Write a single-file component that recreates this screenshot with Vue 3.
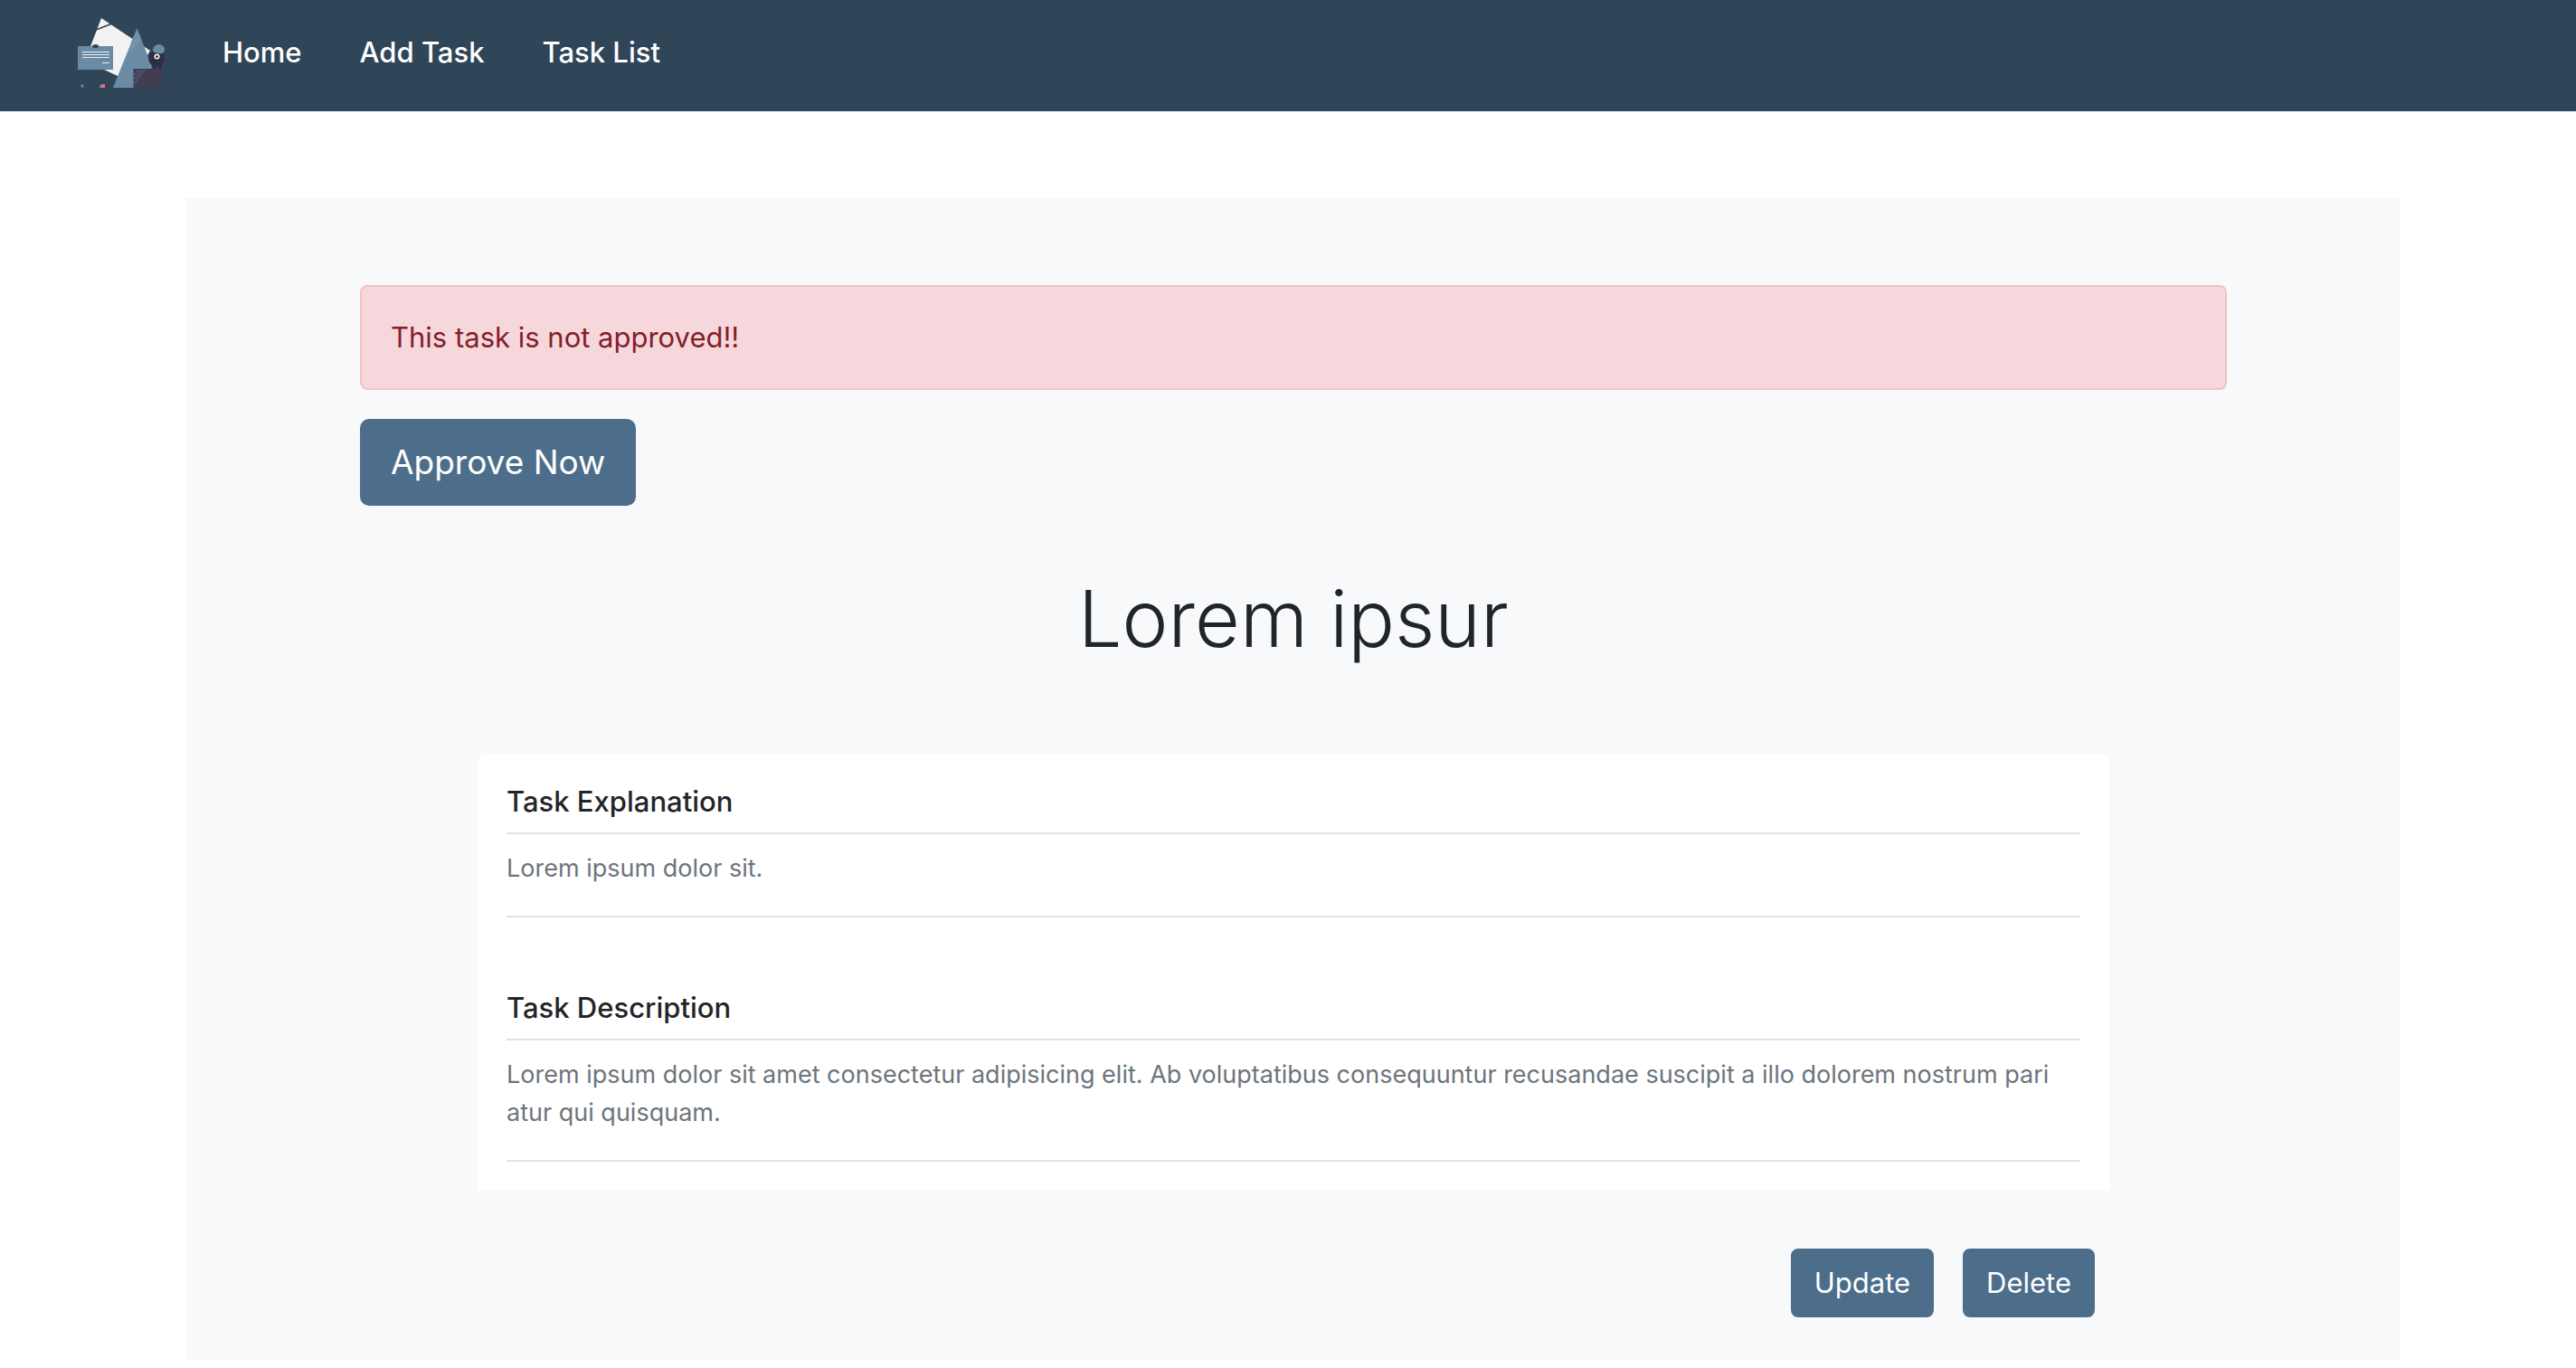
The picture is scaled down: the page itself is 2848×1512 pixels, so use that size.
<script setup>
const links = ['Home', 'Add Task', 'Task List']

const task = {
  title: 'Lorem ipsur',
  explanation: 'Lorem ipsum dolor sit.',
  description:
    'Lorem ipsum dolor sit amet consectetur adipisicing elit. Ab voluptatibus consequuntur recusandae suscipit a illo dolorem nostrum pari atur qui quisquam.',
}
</script>

<template>
  <nav class="navbar">
    <a class="brand" href="#" aria-label="Home page">
      <svg viewBox="0 0 100 80" width="100" height="80" aria-hidden="true">
        <path d="M28 2 82 38 61 73 10 49Z" fill="#f2f2f2" />
        <path d="M17 17 40 8" stroke="#2f4558" stroke-width="1.4" />
        <rect x="2" y="33" width="39" height="26" fill="#6b8ba4" />
        <path d="M7 39.5H37M7 42.5H37M7 45.5H37M29 51.5H37" stroke="#e8edf2" stroke-width="1" />
        <ellipse cx="21.5" cy="33" rx="3.5" ry="2" fill="#3f3d56" />
        <path d="M67.5 13 85 58V79H41Z" fill="#6b8ba4" />
        <path d="M60 29 68 18M59 35 71 21M58 39 72 25" stroke="#9fb6c9" stroke-width=".6" />
        <rect x="63.5" y="58" width="31.5" height="21" fill="#413d53" />
        <path d="M64 65 69 59M64 70 73 59M64 75 76 59" stroke="#6b8ba4" stroke-width=".6" />
        <path d="M85 53H88V58H83.5V57H85ZM92 53H95V58H91Z" fill="#2f2e41" />
        <circle cx="89" cy="46.5" r="9" fill="#2f2e41" />
        <path d="M85 38C85 34 88 31 91.5 31S98 33.5 98 37 95 42 91.5 41 86 41 85 38Z" fill="#6b8ba4" />
        <circle cx="89.5" cy="44.5" r="2.3" fill="#2f2e41" stroke="#fff" stroke-width="1.5" />
        <rect x="28" y="75" width="4" height="4" fill="#ff6584" />
        <circle cx="27.5" cy="77.5" r="1.7" fill="#6b8ba4" />
        <circle cx="7" cy="77" r="1.7" fill="#6b8ba4" />
      </svg>
    </a>
    <a v-for="link in links" :key="link" class="nav-link" href="#">{{ link }}</a>
  </nav>

  <main class="panel">
    <div class="alert" role="alert">This task is not approved!!</div>
    <button class="btn btn-lg" type="button">Approve Now</button>

    <h1 class="title">{{ task.title }}</h1>

    <div class="details">
      <article class="card">
        <section class="entry">
          <h2>Task Explanation</h2>
          <p>{{ task.explanation }}</p>
        </section>
        <section class="entry">
          <h2>Task Description</h2>
          <p>{{ task.description }}</p>
        </section>
      </article>
      <div class="actions">
        <button class="btn" type="button">Update</button>
        <button class="btn" type="button">Delete</button>
      </div>
    </div>
  </main>
</template>

<style>
body {
  background: #fff;
}
</style>

<style scoped>
.navbar,
.panel {
  font-family: Inter, "Liberation Sans", sans-serif;
  color: #212529;
  font-size: 31px;
  line-height: 48px;
}

.navbar {
  display: flex;
  align-items: center;
  background: #2f4558;
  padding: 18px 84px 25px;
}

.brand {
  display: flex;
  margin-right: 30px;
}

.nav-link {
  padding: 0 32px;
  color: #fff;
  font-size: 31px;
  font-weight: 500;
  text-decoration: none;
}

.panel {
  margin: 96px 194px 0 206px;
  padding: 96px 192px 48px;
  background: #f8f9fb;
}

.alert {
  margin-bottom: 32px;
  padding: 32px;
  border: 2px solid #f5c2c7;
  border-radius: 8px;
  background: #f6d7dc;
  color: #842029;
}

.btn {
  padding: 12px 24px;
  border: 2px solid #4d6e8a;
  border-radius: 8px;
  background: #4d6e8a;
  color: #fff;
  font: inherit;
}

.btn-lg {
  display: block;
  padding: 16px 32px;
  border-radius: 10px;
  font-size: 37px;
  line-height: 60px;
}

.title {
  margin: 68px 0 92px;
  font-size: 86px;
  font-weight: 300;
  line-height: 115px;
  text-align: center;
}

.details {
  margin: 0 130px;
}

.card {
  padding: 32px;
  border-radius: 8px 8px 0 0;
  background: #fff;
}

.entry {
  border-bottom: 2px solid #dee2e6;
}

.entry + .entry {
  margin-top: 80px;
}

.entry h2 {
  margin: 0;
  padding-bottom: 14px;
  border-bottom: 2px solid #dee2e6;
  font-size: 31px;
  font-weight: 500;
  line-height: 40px;
}

.entry p {
  margin: 0;
  padding: 17px 0 31px;
  color: #6c757d;
  font-size: 27px;
  line-height: 42px;
}

.actions {
  display: flex;
  justify-content: flex-end;
  gap: 32px;
  margin-top: 64px;
  padding-right: 16px;
}
</style>
